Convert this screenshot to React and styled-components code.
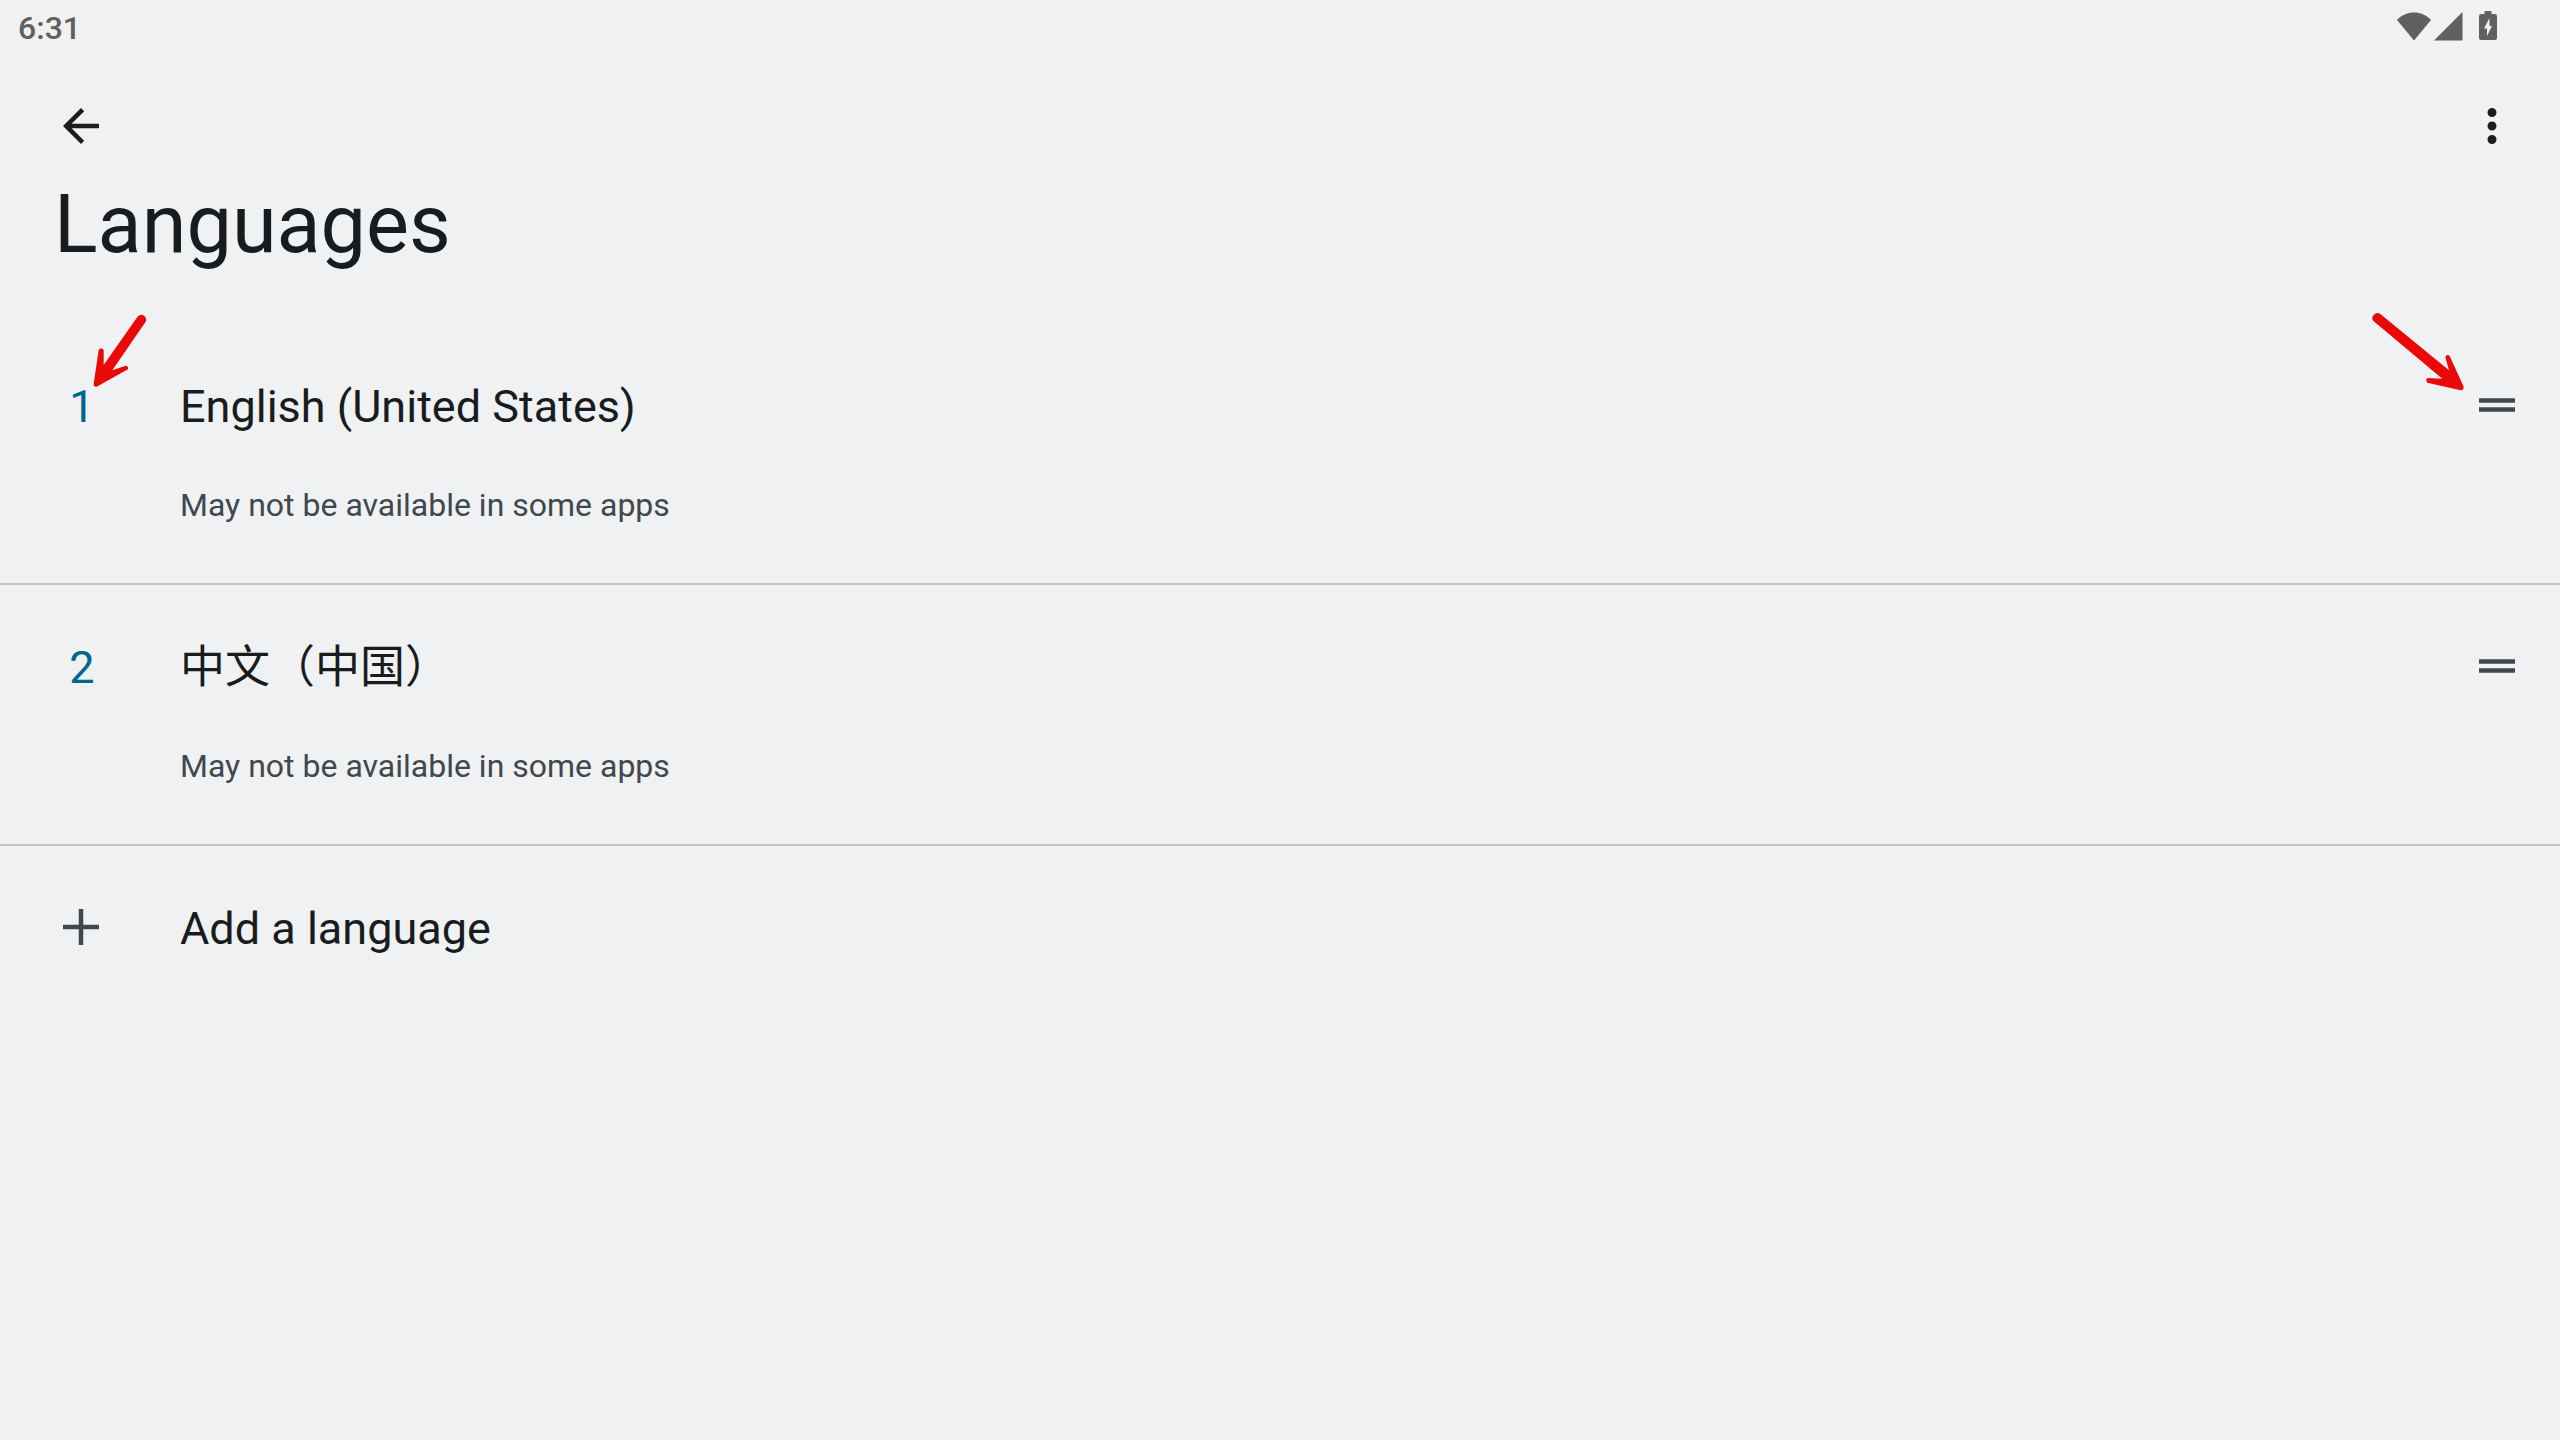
import styled, { createGlobalStyle } from 'styled-components'

const LANGUAGES = [
  { id: 'en-US', name: 'English (United States)', note: 'May not be available in some apps' },
  { id: 'zh-CN', name: '中文（中国）', note: 'May not be available in some apps' },
]

export default function App() {
  return (
    <>
      <GlobalStyle />
      <StatusBar>
        <Clock>6:31</Clock>
        <StatusIcons>
          <Network>
            <WifiIcon />
            <SignalIcon />
          </Network>
          <BatteryIcon />
        </StatusIcons>
      </StatusBar>
      <Toolbar>
        <IconButton aria-label="Back">
          <Icon d="M20 11H7.83l5.59-5.59L12 4l-8 8 8 8 1.41-1.41L7.83 13H20v-2z" />
        </IconButton>
        <IconButton aria-label="More options">
          <Icon d="M12 8a2 2 0 1 0 0-4 2 2 0 0 0 0 4zm0 2a2 2 0 1 0 0 4 2 2 0 0 0 0-4zm0 6a2 2 0 1 0 0 4 2 2 0 0 0 0-4z" />
        </IconButton>
      </Toolbar>
      <main>
        <Title>Languages</Title>
        <List>
          {LANGUAGES.map((language, i) => (
            <Row key={language.id}>
              <Order>{i + 1}</Order>
              <Info>
                <Name lang={language.id}>{language.name}</Name>
                <Note>{language.note}</Note>
              </Info>
              <IconButton $muted aria-label={`Move ${language.name}`}>
                <Icon d="M4 9h16v2H4zM4 13h16v2H4z" />
              </IconButton>
              {i === 0 && <Arrows />}
            </Row>
          ))}
        </List>
        <AddButton>
          <AddIcon>
            <Icon d="M11 4h2v7h7v2h-7v7h-2v-7H4v-2h7z" />
          </AddIcon>
          <Name as="span">Add a language</Name>
        </AddButton>
      </main>
    </>
  )
}

function Icon({ d }) {
  return (
    <svg width="54" height="54" viewBox="0 0 24 24" fill="currentColor" aria-hidden="true">
      <path d={d} />
    </svg>
  )
}

function WifiIcon() {
  return (
    <svg width="34" height="29" viewBox="0 0 34 29" fill="currentColor" aria-hidden="true">
      <path d="M17 28.5 0 8C4.5 3 10.5.5 17 .5S29.5 3 34 8z" />
    </svg>
  )
}

function SignalIcon() {
  return (
    <svg width="29" height="29" viewBox="0 0 29 29" fill="currentColor" aria-hidden="true">
      <path d="M0 28.5 28.5 0V28.5z" />
    </svg>
  )
}

function BatteryIcon() {
  return (
    <svg width="18" height="29" viewBox="0 0 18 29" fill="currentColor" aria-hidden="true">
      <path
        fillRule="evenodd"
        d="M5.5 0h7v3H16a2 2 0 0 1 2 2v22a2 2 0 0 1-2 2H2a2 2 0 0 1-2-2V5a2 2 0 0 1 2-2h3.500zM10.500 7 5 17.500h3V25l5-10h-2.500z"
      />
    </svg>
  )
}

// red pointers to the order number and the drag handle
function Arrows() {
  return (
    <>
      <LeftArrow viewBox="0 0 330 390" aria-hidden="true">
        <path d="M262 51A14 14 0 0 1 286 67L187 211 227 197Q237 199 234 208L140 260Q130 261 131 252L146 150Q153 140 161 150L161 195Z" />
      </LeftArrow>
      <RightArrow viewBox="0 0 630 450" aria-hidden="true">
        <path d="M71 94A15 15 0 0 1 91 72L297 241 286 202Q290 191 299 198L341 290Q341 301 332 301L232 278Q224 268 234 264L277 266Z" />
      </RightArrow>
    </>
  )
}

const GlobalStyle = createGlobalStyle`
  body {
    margin: 0;
    background: #eff1f3;
    color: #191c1e;
    font-family: Roboto, "Noto Sans CJK SC", sans-serif;
  }
  svg { display: block; }
`

const StatusBar = styled.div`
  display: flex;
  align-items: flex-start;
  justify-content: space-between;
  height: 54px;
  box-sizing: border-box;
  padding: 9px 63px 0 18px;
  color: #606060;
`

const Clock = styled.time`
  font-size: 32px;
  font-weight: 500;
  line-height: 38px;
`

const StatusIcons = styled.div`
  display: flex;
  gap: 16px;
  padding-top: 2px;
`

const Network = styled.div`
  display: flex;
  gap: 3px;
  padding-top: 1px;
`

const Toolbar = styled.header`
  display: flex;
  justify-content: space-between;
  padding: 45px 41px 24px 54px;
`

const IconButton = styled.button`
  flex: none;
  padding: 0;
  border: none;
  background: transparent;
  color: ${({ $muted }) => ($muted ? '#41484d' : '#1c1c1e')};
  cursor: pointer;
`

const Title = styled.h1`
  margin: 0;
  padding: 0 54px 51px;
  font-size: 81px;
  font-weight: 400;
  line-height: 96px;
`

const List = styled.ol`
  margin: 0;
  padding: 0;
  list-style: none;
`

const Row = styled.li`
  position: relative;
  display: flex;
  align-items: flex-start;
  padding: 54px 36px 59px 54px;
  border-bottom: 2px solid #c3c5c7;
`

const Order = styled.span`
  width: 56px;
  margin-right: 70px;
  color: #00658f;
  font-size: 45px;
  line-height: 58px;
  text-align: center;
`

const Info = styled.div`
  flex: 1;
`

const Name = styled.div`
  font-size: 45px;
  line-height: 58px;
`

const Note = styled.div`
  margin-top: 50px;
  color: #41484d;
  font-size: 32px;
  line-height: 38px;
`

const AddButton = styled.button`
  display: flex;
  align-items: flex-start;
  width: 100%;
  padding: 54px;
  border: none;
  background: transparent;
  color: inherit;
  font-family: inherit;
  text-align: left;
  cursor: pointer;
`

const AddIcon = styled.span`
  margin-right: 72px;
  color: #41484d;
`

const LeftArrow = styled.svg`
  position: absolute;
  top: -24px;
  left: 50px;
  width: 110px;
  height: 130px;
  fill: #eb0808;
  pointer-events: none;
`

const RightArrow = styled.svg`
  position: absolute;
  top: -34px;
  right: 0;
  width: 210px;
  height: 150px;
  fill: #eb0808;
  pointer-events: none;
`
